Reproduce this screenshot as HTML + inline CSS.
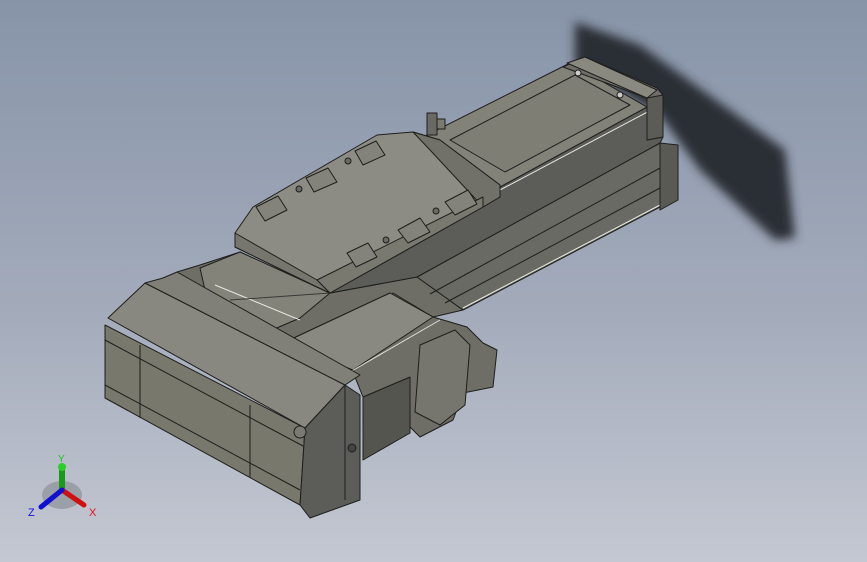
<!DOCTYPE html>
<html><head><style>
html,body{margin:0;padding:0;width:867px;height:562px;overflow:hidden}
body{background:linear-gradient(180deg,#8794a8 0%,#a3abbb 55%,#c4c8d2 100%);font-family:"Liberation Sans",sans-serif}
svg{position:absolute;left:0;top:0}
</style></head><body>
<svg width="867" height="562" viewBox="0 0 867 562">
<defs>
<filter id="b" x="-20%" y="-20%" width="140%" height="140%"><feGaussianBlur stdDeviation="5"/></filter>
</defs>
<polygon points="575,22 640,45 785,150 795,238 775,240 700,170 660,115 575,65" fill="#2c2f36" filter="url(#b)"/>
<g stroke="#1e1e1c" stroke-width="1" stroke-linejoin="round">
<!-- filler rail behind motor/carriage -->
<polygon points="177,272 200,265 240,252 330,293 417,277 463,310 433,317 390,293 283,343 260,330" fill="#6e6d66"/>
<polygon points="200,268 240,252 330,293 300,318 265,333 205,290" fill="#848379"/>
<line x1="215" y1="285" x2="300" y2="320" stroke="#e6e6e0"/>
<line x1="230" y1="300" x2="330" y2="293" stroke="#3a3a36"/>
<!-- extrusion side face -->
<polygon points="417,277 660,143 660,207 463,310" fill="#6a6a64"/>
<line x1="660" y1="168" x2="430" y2="294"/>
<line x1="660" y1="188" x2="445" y2="303"/>
<line x1="660" y1="205" x2="463" y2="308" stroke="#ecece6"/>
<polygon points="660,143 678,145 678,200 660,210" fill="#5a5a55"/>
<polygon points="500,187 647,107 663,137 660,143 417,277 330,293" fill="#5c5c58"/>
<line x1="500" y1="190" x2="655" y2="108" stroke="#e6e6e0"/>
<polygon points="423,137 570,63 647,107 500,187" fill="#838279"/>
<polygon points="450,140 575,75 630,105 505,172" fill="#7f7e75"/>
<polygon points="563,67 585,57 657,88 663,95 663,137 647,140 647,98" fill="#6f6e68"/>
<polygon points="567,63 585,57 657,90 647,98" fill="#8a8980"/>
<polygon points="647,98 663,95 663,137 647,140" fill="#5c5c56"/>
<circle cx="578" cy="73" r="3" fill="#ccc"/><circle cx="620" cy="95" r="3" fill="#ccc"/>
<rect x="427" y="113" width="10" height="22" fill="#6a6a64"/>
<rect x="437" y="119" width="8" height="10" fill="#7a7a72"/>
<!-- carriage -->
<polygon points="235,233 253,207 377,135 413,132 440,140 500,185 500,197 483,207 330,293 317,287 235,247" fill="#8d8c84"/>
<polygon points="413,132 440,140 500,185 500,197 483,207 430,150" fill="#727169"/>
<polygon points="235,233 317,280 330,293 317,287 235,247" fill="#77766e"/>
<polygon points="317,280 483,197 483,207 330,293" fill="#7a7970"/>
<g fill="#84837b"><polygon points="256,207 278,196 287,210 265,221"/><polygon points="306,178 328,168 337,182 314,192"/><polygon points="355,151 376,141 385,155 363,165"/><polygon points="398,230 420,218 430,232 408,243"/><polygon points="445,202 468,190 477,204 455,215"/><polygon points="347,253 368,243 377,257 356,267"/></g>
<g fill="#6a6a64"><circle cx="299" cy="189" r="3"/><circle cx="436" cy="211" r="3"/><circle cx="386" cy="240" r="3"/><circle cx="348" cy="161" r="3" /></g>
<!-- coupling -->
<polygon points="363,397 410,377 410,433 363,460" fill="#55554f"/>
<polygon points="393,293 433,317 467,327 483,343 497,350 493,387 463,393 453,420 420,437 410,427 410,377 363,397 353,372" fill="#6e6d66"/>
<polygon points="283,343 390,293 433,317 353,370" fill="#8a8981"/>
<line x1="350" y1="372" x2="440" y2="320" stroke="#e0e0da"/>
<polygon points="420,345 455,330 470,345 465,405 440,425 415,412" fill="#77766e"/>
<!-- motor -->
<polygon points="105,325 305,428 300,505 105,398" fill="#78786c"/>
<polygon points="108,318 145,283 345,385 305,428" fill="#888780"/>
<polygon points="145,283 163,278 177,272 360,375 345,385" fill="#818078"/>
<polygon points="305,428 345,385 360,395 360,500 310,518 300,505" fill="#5c5c58"/>
<line x1="140" y1="345" x2="140" y2="418"/>
<line x1="250" y1="405" x2="250" y2="478"/>
<line x1="105" y1="340" x2="303" y2="446"/>
<line x1="105" y1="385" x2="300" y2="490"/>
<line x1="345" y1="385" x2="345" y2="500"/>
<circle cx="300" cy="432" r="6" fill="#7a7a72"/>
<circle cx="352" cy="448" r="4" fill="#444"/>
</g>
<g>
<ellipse cx="62" cy="495" rx="20" ry="14" fill="#7a7d84" opacity="0.5"/>
<rect x="59" y="468" width="6" height="22" fill="#1a9a1a"/>
<circle cx="62" cy="467" r="4" fill="#2ad02a"/>
<line x1="62" y1="490" x2="84" y2="505" stroke="#d01010" stroke-width="5" stroke-linecap="round"/>
<line x1="62" y1="490" x2="41" y2="507" stroke="#1010d0" stroke-width="5" stroke-linecap="round"/>
<text x="58" y="462" font-size="10" fill="#1fc21f">Y</text>
<text x="89" y="516" font-size="11" fill="#e01010">X</text>
<text x="28" y="516" font-size="11" fill="#1010e0">Z</text>
</g>
</svg>
</body></html>
